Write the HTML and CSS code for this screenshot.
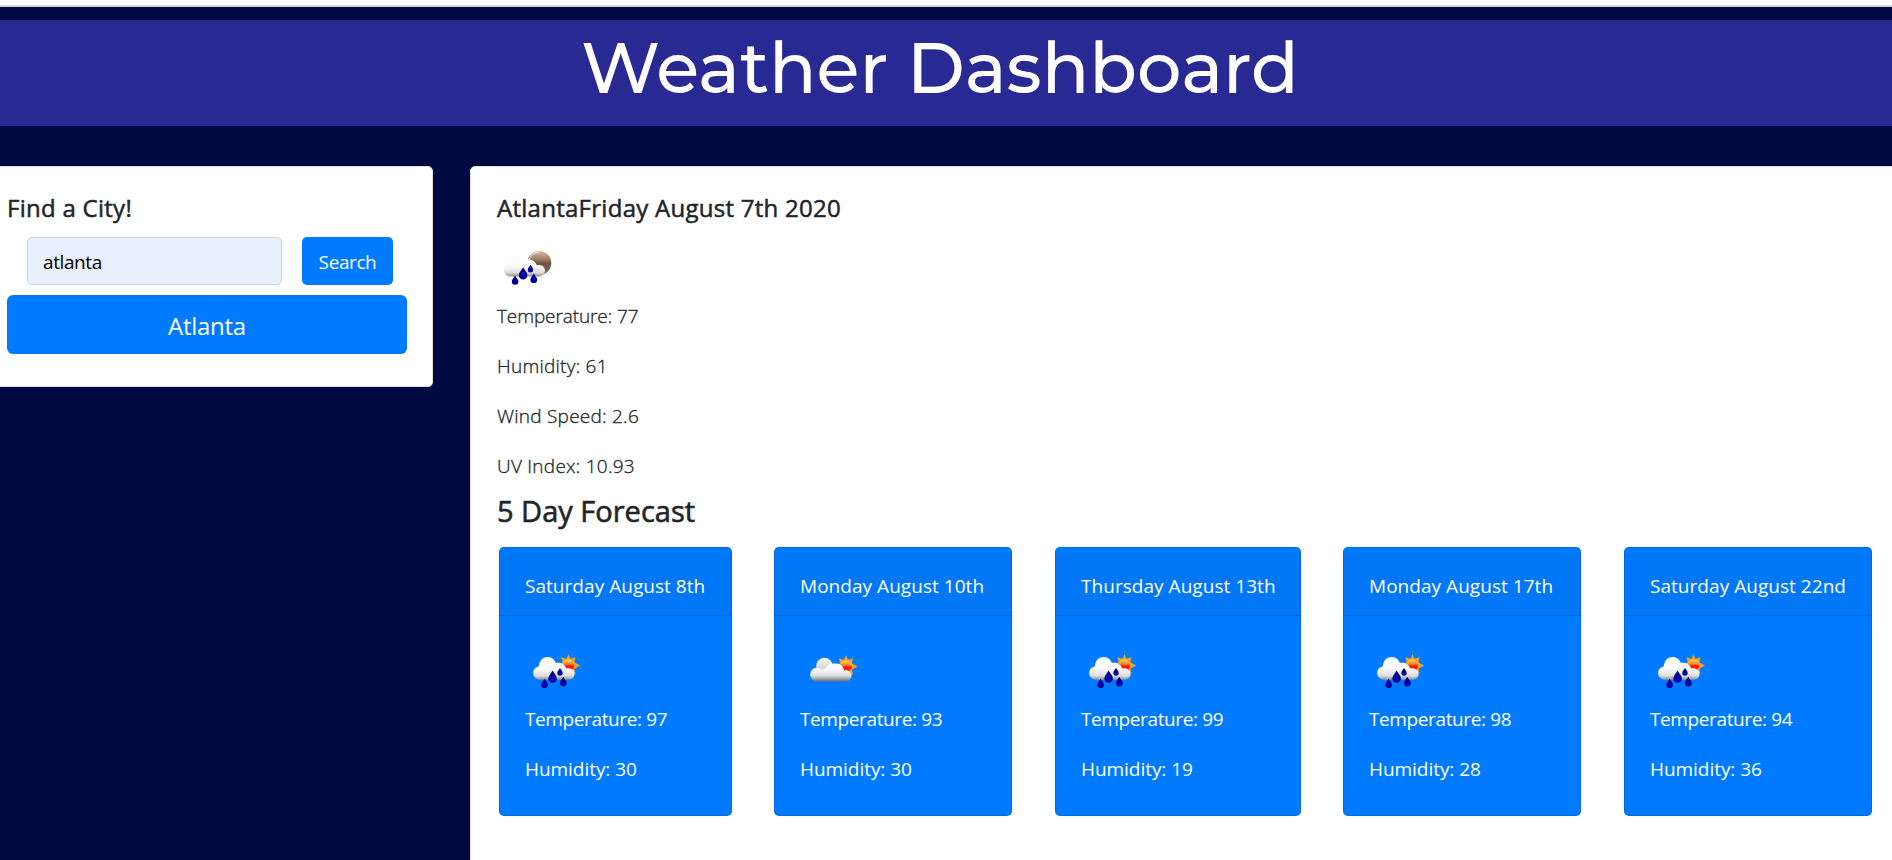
FILE: index.html
```html
<!DOCTYPE html>
<html lang="en">
<head>
<meta charset="utf-8">
<title>Weather Dashboard</title>
<link rel="stylesheet" href="styles.css">
</head>
<body>
<svg class="defs" width="0" height="0">
  <defs>
    <linearGradient id="cloud" gradientUnits="userSpaceOnUse" x1="0" y1="17" x2="0" y2="41">
      <stop offset="0" stop-color="#fff"/><stop offset=".5" stop-color="#fafafa"/><stop offset=".78" stop-color="#dedede"/><stop offset="1" stop-color="#777"/>
    </linearGradient>
    <linearGradient id="back" x1="0" y1="0" x2="0" y2="1">
      <stop offset="0" stop-color="#f4f4f4"/><stop offset="1" stop-color="#c8c8c8"/>
    </linearGradient>
    <linearGradient id="sun" x1="0" y1="0" x2="0" y2="1">
      <stop offset="0" stop-color="#ffe36b"/><stop offset=".4" stop-color="#ff7a1c"/><stop offset=".55" stop-color="#fb1204"/><stop offset="1" stop-color="#ff2a00"/>
    </linearGradient>
    <linearGradient id="moon" x1="0" y1="0" x2="0" y2="1">
      <stop offset="0" stop-color="#d9bda8"/><stop offset=".35" stop-color="#9c7a62"/><stop offset=".5" stop-color="#70543f"/><stop offset="1" stop-color="#8a6c56"/>
    </linearGradient>
    <radialGradient id="drop" cx=".5" cy=".65" r=".5">
      <stop offset="0" stop-color="#0000c8"/><stop offset="1" stop-color="#00007c"/>
    </radialGradient>
    <symbol id="sunshape" viewBox="0 0 24 24">
      <path fill="#f7a11c" d="M12 0l2 5L19.500 3.500 18 8.500 24 12l-6 3.500 1.500 5L14 19l-2 5-2-5-5.500 1.500L6 15.500 0 12l6-3.500L4.500 3.500 10 5z"/>
      <circle cx="12" cy="12" r="6.400" fill="url(#sun)" stroke="#ffb43a" stroke-width=".8"/>
    </symbol>
    <symbol id="raincloud" viewBox="0 0 70 60">
      <path fill="url(#cloud)" d="M19.500 39.700a6.700 6.700 0 0 1-.8-13.300C19.500 20 23 16.900 27.500 16.900c4.300 0 7.300 2.600 8.400 6.200 4.500-1.500 9.300 1.200 10.300 5.400 4.700-1 8.300 1.700 8.300 5.400 0 3.400-2.500 5.800-5.900 5.800z"/>
      <g fill="url(#drop)">
        <path d="M32.600 30.500c1.700 3.300 4.300 5.200 4.300 8a4.300 4.300 0 0 1-8.600 0c0-2.800 2.600-4.700 4.300-8z"/>
        <path d="M24.600 38.800c1.300 2.500 3.300 3.900 3.300 6a3.300 3.300 0 0 1-6.600 0c0-2.100 2-3.500 3.300-6z"/>
        <path d="M43.300 36.800c1.300 2.500 3.400 4 3.400 6.200a3.400 3.400 0 0 1-6.800 0c0-2.200 2.100-3.700 3.400-6.200z"/>
        <path d="M40 28c1 2 2.700 3.200 2.700 5a2.700 2.700 0 0 1-5.400 0c0-1.800 1.700-3 2.700-5z"/>
      </g>
    </symbol>
    <symbol id="rain-day" viewBox="0 0 70 60">
      <use href="#sunshape" x="37" y="14" width="23" height="23"/>
      <use href="#raincloud" width="70" height="60"/>
    </symbol>
    <symbol id="few-clouds" viewBox="0 0 70 60">
      <use href="#sunshape" x="39.500" y="15" width="23" height="23"/>
      <circle cx="29.400" cy="26" r="8.300" fill="url(#back)"/>
      <path fill="url(#cloud)" d="M21.500 41.200a6.800 6.800 0 0 1-.7-13.500c2.500-.2 4 .6 5.400 2 2-.2 3.700-.7 5-1.800 1-3.200 4.800-4.800 9-4.300 4.500-.6 8.300 2.300 8.800 6.800 4.500-.6 7.500 1.500 7.500 5.300 0 3.300-2.500 5.500-5.700 5.500z"/>
    </symbol>
    <symbol id="rain-night" viewBox="0 0 80 60">
      <circle cx="49.300" cy="28.100" r="12" fill="url(#moon)"/>
      <path d="M39 25a11 11 0 0 1 10-7.500" fill="none" stroke="#fff" stroke-opacity=".6" stroke-width="1.200"/>
      <use href="#raincloud" x=".5" y="1.700" width="70" height="60"/>
    </symbol>
  </defs>
</svg>

<div class="top-strip"></div>
<header class="header"><h1 class="title">Weather Dashboard</h1></header>

<main class="layout">
  <section class="panel search">
    <h5 class="heading">Find a City!</h5>
    <form class="search-row">
      <input class="city-input" type="text" value="atlanta">
      <button class="search-btn" type="button">Search</button>
    </form>
    <button class="city-btn" type="button">Atlanta</button>
  </section>

  <section class="panel weather">
    <h5 class="heading">AtlantaFriday August 7th 2020</h5>
    <svg class="icon-now" width="80" height="60"><use href="#rain-night"/></svg>
    <p class="stat tight">Temperature: 77</p>
    <p class="stat">Humidity: 61</p>
    <p class="stat">Wind Speed: 2.6</p>
    <p class="stat">UV Index: 10.93</p>
    <h4 class="forecast-title">5 Day Forecast</h4>
    <div class="forecast">
      <article class="card w233">
        <div class="card-head">Saturday August 8th</div>
        <div class="card-body"><svg class="icon" width="70" height="60"><use href="#rain-day"/></svg><p class="line tight">Temperature: 97</p><p class="line">Humidity: 30</p></div>
      </article>
      <article class="card w238">
        <div class="card-head">Monday August 10th</div>
        <div class="card-body"><svg class="icon" width="70" height="60"><use href="#few-clouds"/></svg><p class="line tight">Temperature: 93</p><p class="line">Humidity: 30</p></div>
      </article>
      <article class="card w246">
        <div class="card-head">Thursday August 13th</div>
        <div class="card-body"><svg class="icon" width="70" height="60"><use href="#rain-day"/></svg><p class="line tight">Temperature: 99</p><p class="line">Humidity: 19</p></div>
      </article>
      <article class="card w238">
        <div class="card-head">Monday August 17th</div>
        <div class="card-body"><svg class="icon" width="70" height="60"><use href="#rain-day"/></svg><p class="line tight">Temperature: 98</p><p class="line">Humidity: 28</p></div>
      </article>
      <article class="card w248">
        <div class="card-head">Saturday August 22nd</div>
        <div class="card-body"><svg class="icon" width="70" height="60"><use href="#rain-day"/></svg><p class="line tight">Temperature: 94</p><p class="line">Humidity: 36</p></div>
      </article>
    </div>
  </section>
</main>
</body>
</html>
```
FILE: styles.css
```css
* { box-sizing: border-box; }
html, body { height: 100%; }
body {
  margin: 0;
  display: flex;
  flex-direction: column;
  overflow: hidden;
  background: #000941;
  color: #212529;
  font: 19px/30px "Segoe UI", "Open Sans", sans-serif;
}
h1, h4, h5, p { margin: 0; font-weight: 500; }
button, input { font: inherit; border: 0; margin: 0; }
svg { display: block; }
.defs { position: absolute; }

.top-strip { flex: none; height: 7px; background: #fff; border-bottom: 2px solid #d4d8dc; }
.header { flex: none; height: 106px; margin-top: 13px; padding: 6px 12px 0 0; background: #292994; text-align: center; }
.title { color: #fff; font: 500 70px/84px Montserrat, Inter, sans-serif; }

.layout { flex: none; display: flex; align-items: flex-start; gap: 37px; margin-top: 40px; }
.panel { background: #fff; border: 1px solid #dfdfdf; border-radius: 5px; padding: 26px; }
.heading { font-size: 24px; line-height: 30px; letter-spacing: .27px; -webkit-text-stroke: .5px #212529; }

.search { width: 448px; height: 221px; margin-left: -15px; padding: 26px 25px 32px 21px; }
.search-row { display: flex; gap: 20px; margin: 14px 0 10px 20px; }
.city-input {
  width: 255px; height: 48px; padding: 2px 15px 0;
  background: #e8f0fe; color: #000;
  border: 1px solid #ced4da; border-radius: 5px;
  letter-spacing: -.4px;
}
.search-btn, .city-btn { background: #007bff; color: #fff; text-align: center; padding: 0; }
.search-btn { width: 91px; height: 48px; border-radius: 5px; letter-spacing: -.4px; padding-top: 1px; }
.city-btn { width: 400px; height: 59px; border-radius: 6px; font-size: 24px; letter-spacing: -.28px; padding-top: 2px; }

.weather { flex: none; width: 1440px; height: 720px; }
.icon-now { margin: 12px 0 0 -7px; }
.stat { margin-top: 20px; font-weight: 300; letter-spacing: .25px; -webkit-text-stroke: .3px #212529; }
.stat.tight { margin-top: 6px; letter-spacing: -.1px; }
.forecast-title { margin-top: 12px; font-size: 29px; line-height: 36px; letter-spacing: 0; -webkit-text-stroke: .6px #212529; }

.forecast { display: flex; gap: 42px; margin: 18px 0 0 2px; }
.card { flex: none; height: 269px; padding-top: 7px; background: #007bff; color: #fff; border-radius: 5px; box-shadow: inset 0 0 0 1px rgba(0, 0, 0, .125); }
.card:nth-child(2n + 3) { margin-left: 1px; }
.w233 { width: 233px; }
.w238 { width: 238px; }
.w246 { width: 246px; }
.w248 { width: 248px; }
.card-head { height: 62px; padding: 17px 0 0 26px; background: rgba(0, 0, 0, .03); border-bottom: 1px solid rgba(0, 0, 0, .125); letter-spacing: .04px; white-space: nowrap; }
.card-body { padding: 24px 26px; }
.icon { margin-left: -5px; }
.line { margin-top: 20px; letter-spacing: -.05px; }
.line.tight { margin-top: 4px; letter-spacing: -.38px; }
```
